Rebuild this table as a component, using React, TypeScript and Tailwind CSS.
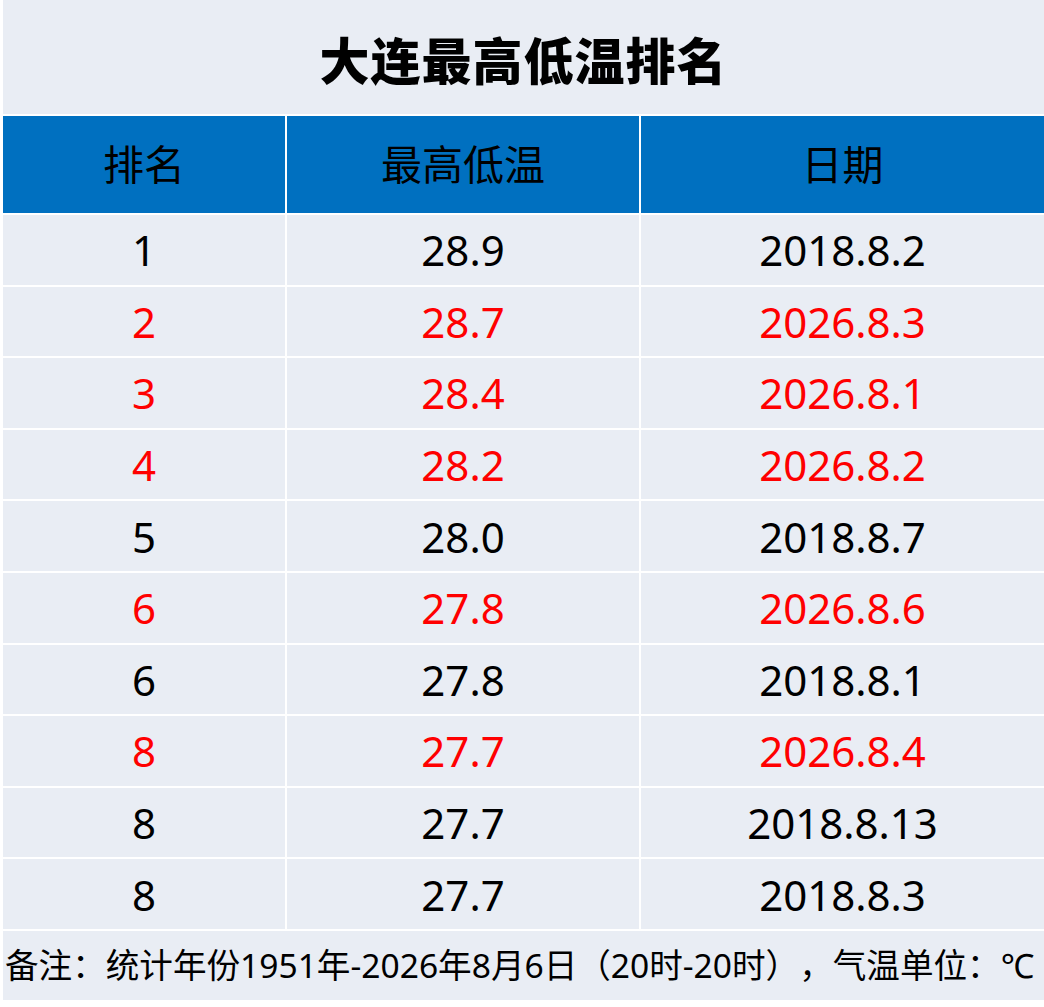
import React from 'react';

type Row = { rank: string; temp: string; date: string; hot?: boolean };

const rows: Row[] = [
    { rank: '1', temp: '28.9', date: '2018.8.2' },
    { rank: '2', temp: '28.7', date: '2026.8.3', hot: true },
    { rank: '3', temp: '28.4', date: '2026.8.1', hot: true },
    { rank: '4', temp: '28.2', date: '2026.8.2', hot: true },
    { rank: '5', temp: '28.0', date: '2018.8.7' },
    { rank: '6', temp: '27.8', date: '2026.8.6', hot: true },
    { rank: '6', temp: '27.8', date: '2018.8.1' },
    { rank: '8', temp: '27.7', date: '2026.8.4', hot: true },
    { rank: '8', temp: '27.7', date: '2018.8.13' },
    { rank: '8', temp: '27.7', date: '2018.8.3' },
];

const font = { fontFamily: '"Noto Sans", "Noto Sans CJK SC", sans-serif' };

export default function App() {
    return (
        <div className="w-[1044px] h-[1007px] bg-white pl-[3px] flex flex-col gap-[2px]" style={font}>
            {/* Title */}
            <div className="h-[114px] bg-[#e9edf4] flex items-center justify-center pt-[8px]">
                <h1 className="text-[50px] font-black tracking-[1px] text-black leading-none">大连最高低温排名</h1>
            </div>

            {/* Table */}
            <div className="grid grid-cols-[282px_352px_403px] gap-[2px]">
                <div className="h-[97px] bg-[#0070c0] flex items-center justify-center text-[41px] text-black">排名</div>
                <div className="h-[97px] bg-[#0070c0] flex items-center justify-center text-[41px] text-black">最高低温</div>
                <div className="h-[97px] bg-[#0070c0] flex items-center justify-center text-[41px] text-black">日期</div>
                {rows.map((r, i) => {
                    const color = r.hot ? 'text-[#ff0000]' : 'text-black';
                    return (
                        <React.Fragment key={i}>
                            <div className={`h-[69.6px] bg-[#e9edf4] flex items-center justify-center text-[42px] ${color}`}>{r.rank}</div>
                            <div className={`h-[69.6px] bg-[#e9edf4] flex items-center justify-center text-[42px] ${color}`}>{r.temp}</div>
                            <div className={`h-[69.6px] bg-[#e9edf4] flex items-center justify-center text-[42px] ${color}`}>{r.date}</div>
                        </React.Fragment>
                    );
                })}
            </div>

            {/* Footer note */}
            <div className="h-[69px] bg-[#e9edf4] flex items-center pl-[2px] text-[33.6px] text-black whitespace-nowrap [text-spacing-trim:space-all]">
                备注：统计年份1951年-2026年8月6日（20时-20时），气温单位：℃
            </div>
        </div>
    );
}
